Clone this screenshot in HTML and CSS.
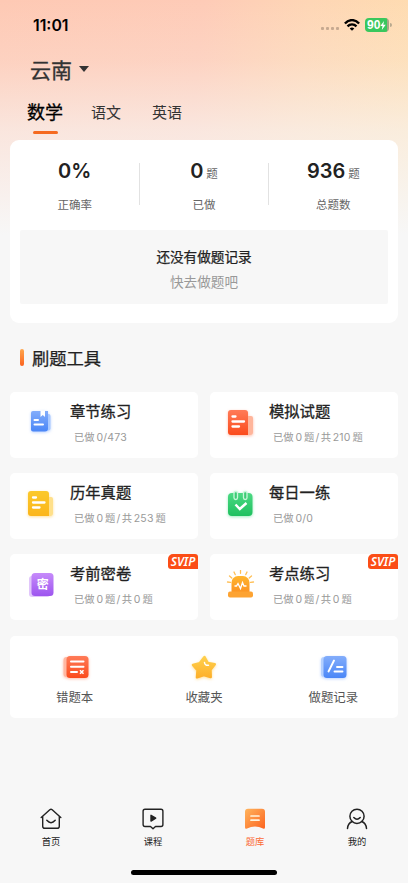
FILE: index.html
```
<!DOCTYPE html>
<html lang="zh-CN">
<head>
<meta charset="utf-8">
<title>题库</title>
<link rel="stylesheet" href="styles.css">
</head>
<body>
<svg class="defs" width="0" height="0" aria-hidden="true">
  <defs>
    <linearGradient id="blue" x1="0" y1="0" x2="0" y2="1"><stop offset="0" stop-color="#83adfb"/><stop offset="1" stop-color="#4a86f7"/></linearGradient>
    <linearGradient id="red" x1="0" y1="0" x2="0" y2="1"><stop offset="0" stop-color="#ff7b58"/><stop offset="1" stop-color="#fb4b1c"/></linearGradient>
    <linearGradient id="yellow" x1="0" y1="0" x2="0" y2="1"><stop offset="0" stop-color="#fbc92c"/><stop offset="1" stop-color="#fbb51a"/></linearGradient>
    <linearGradient id="green" x1="0" y1="0" x2="0" y2="1"><stop offset="0" stop-color="#4cd983"/><stop offset="1" stop-color="#1fc05f"/></linearGradient>
    <linearGradient id="purple" x1="0" y1="0" x2="0" y2="1"><stop offset="0" stop-color="#c68bfa"/><stop offset="1" stop-color="#9d55ef"/></linearGradient>
    <linearGradient id="orange" x1="0" y1="0" x2="0" y2="1"><stop offset="0" stop-color="#ffb62e"/><stop offset="1" stop-color="#fc9322"/></linearGradient>
    <linearGradient id="star" x1="0" y1="0" x2="0" y2="1"><stop offset="0" stop-color="#ffd04c"/><stop offset="1" stop-color="#fdb02b"/></linearGradient>
    <linearGradient id="bank" x1="0" y1="0" x2="1" y2="1"><stop offset="0" stop-color="#ffb45c"/><stop offset="1" stop-color="#fc6420"/></linearGradient>
  </defs>
</svg>

<header class="status">
  <span class="time">11:01</span>
  <span class="signal"><i></i><i></i><i></i><i></i></span>
  <svg class="wifi" width="16" height="12" viewBox="0 0 16 12" fill="none" stroke="#000" stroke-width="2.300"><path d="M.9 4.500C5-.1 11-.1 15.100 4.500"/><path d="M3.500 7.400c2.600-2.700 6.400-2.700 9 0"/><path d="M5.700 9.400q2.300-1.900 4.600 0L8 11.800z" fill="#000" stroke="none"/></svg>
  <span class="battery">90<svg width="6" height="9" viewBox="0 0 6 9"><path d="M4 0L.3 5h2.200L1.800 9 5.700 3.800H3.300z" fill="#fff"/></svg></span><i class="battery-tip"></i>
</header>

<div class="city">云南<i class="caret"></i></div>

<nav class="subjects">
  <span class="subject active">数学</span>
  <span class="subject">语文</span>
  <span class="subject">英语</span>
</nav>

<main>
  <section class="summary">
    <div class="stats">
      <div class="stat"><div class="value">0%</div><div class="label">正确率</div></div>
      <div class="stat"><div class="value">0<small>题</small></div><div class="label">已做</div></div>
      <div class="stat"><div class="value">936<small>题</small></div><div class="label">总题数</div></div>
    </div>
    <div class="empty"><strong>还没有做题记录</strong><span>快去做题吧</span></div>
  </section>

  <h2 class="heading">刷题工具</h2>

  <section class="tools">
    <article class="tool">
      <svg class="icon glow-blue" width="32" height="32" viewBox="0 0 32 32"><rect x="9" y="6" width="13.500" height="16.500" rx="2" fill="#a9c9ff"/><path d="M5 3h15v17.500a3 3 0 0 1-3 3H5a2 2 0 0 1-2-2V5a2 2 0 0 1 2-2z" fill="url(#blue)"/><path d="M12.500 2.500h4.500v6.500l-2.200-2-2.300 2z" fill="#fff"/><path d="M6.500 12h3.500M6.500 16.500h8.500" stroke="#fff" stroke-width="2" stroke-linecap="round"/></svg>
      <div><h3>章节练习</h3><p>已做<b>0/473</b></p></div>
    </article>
    <article class="tool">
      <svg class="icon glow-red" width="32" height="32" viewBox="0 0 32 32"><path d="M18 8h9a2 2 0 0 1 2 2v14a3 3 0 0 1-3 3h-8z" fill="#ffb59b"/><path d="M7 2h14a3 3 0 0 1 3 3v22H7a3 3 0 0 1-3-3V5a3 3 0 0 1 3-3z" fill="url(#red)"/><path d="M8.500 8.500h3M8.500 13.500h11.500M8.500 18.500h6.500" stroke="#fff" stroke-width="2.300" stroke-linecap="round"/></svg>
      <div><h3>模拟试题</h3><p>已做<b>0</b>题<b class="slash">/</b>共<b>210</b>题</p></div>
    </article>
    <article class="tool">
      <svg class="icon glow-yellow" width="32" height="32" viewBox="0 0 32 32"><path d="M18 8h8a2 2 0 0 1 2 2v14a3 3 0 0 1-3 3h-7z" fill="#ffe08a"/><path d="M6 2h15a3 3 0 0 1 3 3v22H6a3 3 0 0 1-3-3V5a3 3 0 0 1 3-3z" fill="url(#yellow)"/><path d="M8 8.500h3M8 13.500h11.500M8 18.500h6.500" stroke="#fff" stroke-width="2.300" stroke-linecap="round"/></svg>
      <div><h3>历年真题</h3><p>已做<b>0</b>题<b class="slash">/</b>共<b>253</b>题</p></div>
    </article>
    <article class="tool">
      <svg class="icon glow-green" width="32" height="32" viewBox="0 0 32 32"><rect x="4" y="4" width="24.500" height="23" rx="4" fill="url(#green)"/><g fill="#3dcb75" stroke="#c9f6da" stroke-width="1.300"><rect x="10" y="2.500" width="3.500" height="8" rx="1.700"/><rect x="19.500" y="2.500" width="3.500" height="8" rx="1.700"/></g><path d="M11.500 15.500l4.300 4.500 6.700-6" fill="none" stroke="#fff" stroke-width="2.500"/></svg>
      <div><h3>每日一练</h3><p>已做<b>0/0</b></p></div>
    </article>
    <article class="tool">
      <svg class="icon" width="32" height="32" viewBox="0 0 32 32"><rect x="4" y="6" width="21" height="21" rx="3" fill="#e1c6fb"/><rect x="6.500" y="3" width="22" height="23" rx="3.500" fill="url(#purple)"/><text x="17.800" y="19" text-anchor="middle" font-family="Noto Sans CJK SC, sans-serif" font-size="12" font-weight="700" fill="#fff">密</text></svg>
      <div><h3>考前密卷</h3><p>已做<b>0</b>题<b class="slash">/</b>共<b>0</b>题</p></div>
      <span class="svip">SVIP</span>
    </article>
    <article class="tool">
      <svg class="icon" width="32" height="32" viewBox="0 0 32 32"><g transform="translate(-.5 -.5)"><g stroke="#ffbf55" stroke-width="1.300" stroke-linecap="round"><path d="M17 .8v3M10.500 2.500l1.200 2.600M23.500 2.500l-1.200 2.600M6 6.500l2.300 2M28 6.500l-2.300 2M4 12.500l3 .4M30 12.500l-3 .4"/></g><path d="M8 23V13a6.500 6.500 0 0 1 6.500-6.500h5a6.500 6.500 0 0 1 6.500 6.500v10z" fill="url(#orange)"/><rect x="4.500" y="22" width="25" height="6" rx="2" fill="#fda332"/><path d="M11 16.500h2l1.500-2.500 2.500 5 2-6 1.500 3.500H23" fill="none" stroke="#fff" stroke-width="1.300"/></g></svg>
      <div><h3>考点练习</h3><p>已做<b>0</b>题<b class="slash">/</b>共<b>0</b>题</p></div>
      <span class="svip">SVIP</span>
    </article>
  </section>

  <section class="shortcuts">
    <div class="shortcut">
      <svg class="glow-red" width="28" height="26" viewBox="0 0 28 26"><rect x="2.500" y="3" width="20" height="20" rx="3" fill="#ffb8a2"/><rect x="5.500" y="2" width="22" height="22" rx="3.500" fill="url(#red)"/><path d="M10 7.500h12.500M10 12.700h12.500M10 18h6" stroke="#fff" stroke-width="2" stroke-linecap="round"/><path d="M19 16.200l3.500 3.600m0-3.600l-3.500 3.600" stroke="#fff" stroke-width="1.500"/></svg>
      <span>错题本</span>
    </div>
    <div class="shortcut">
      <svg class="glow-yellow" width="28" height="26" viewBox="0 0 28 26"><path d="M14.500 3l3.300 6 7 1.300-4.300 5.500.2 7.200-6.900-2-6.800 2.300.5-7L3 11l6.700-1.800z" fill="url(#star)" stroke="url(#star)" stroke-width="2.500" stroke-linejoin="round"/><path d="M14.500 8.500c.3 2.300 2 3.200 4 2.700" fill="none" stroke="#fff" stroke-width="1.500" stroke-linecap="round"/></svg>
      <span>收藏夹</span>
    </div>
    <div class="shortcut">
      <svg class="glow-blue" width="28" height="26" viewBox="0 0 28 26"><rect x="2" y="3" width="20" height="20" rx="3" fill="#b4d0ff"/><rect x="4.500" y="2" width="23" height="22" rx="3.500" fill="url(#blue)"/><path d="M15 6.500L9.500 17.500M18 13h5.500M15.500 17.500h8" stroke="#fff" stroke-width="1.900" stroke-linecap="round"/></svg>
      <span>做题记录</span>
    </div>
  </section>
</main>

<footer class="tabbar">
  <div class="tab"><svg width="22" height="22" viewBox="0 0 22 22" fill="none" stroke="#222" stroke-width="1.400" stroke-linecap="round" stroke-linejoin="round"><path d="M1.200 9.500L9.800 1.700q1.200-.9 2.400 0L20.800 9.500M2.700 8.200v10q0 2.100 2.100 2.100h12.400q2.100 0 2.100-2.100v-10M6.800 12.300q4.200 4.800 8.400 0"/></svg><span>首页</span></div>
  <div class="tab"><svg width="22" height="22" viewBox="0 0 22 22" fill="none" stroke="#222" stroke-width="1.400" stroke-linejoin="round"><path d="M3 1.300h16q1.900 0 1.900 1.900v13.400q0 1.900-1.900 1.900h-5.500L11 20.800l-2.500-2.300H3q-1.900 0-1.900-1.900V3.200Q1.100 1.300 3 1.300z"/><path d="M9 7.300v5.800l4.700-2.900z" fill="#222"/></svg><span>课程</span></div>
  <div class="tab current"><svg width="22" height="22" viewBox="0 0 22 22"><path d="M4 .8h14q3 0 3 3v15.400q0 2.200-2 1.400Q15 18.500 11 18.500T3 20.600q-2 .8-2-1.400V3.800q0-3 3-3z" fill="url(#bank)"/><path d="M7 8h8M7 12.200h8" stroke="#fff3dc" stroke-width="1.700" stroke-linecap="round"/></svg><span>题库</span></div>
  <div class="tab"><svg width="22" height="22" viewBox="0 0 22 22" fill="none" stroke="#222" stroke-width="1.500" stroke-linecap="round"><circle cx="11" cy="8.300" r="7.100"/><path d="M1.500 20.500q.5-5.500 4.800-7M20.500 20.500q-.5-5.500-4.800-7M7.800 9.500q3.200 3.400 6.400 0"/></svg><span>我的</span></div>
</footer>
<div class="home-indicator"></div>
</body>
</html>
```
FILE: styles.css
```
* { box-sizing: border-box; }

body {
  margin: 0;
  width: 408px;
  height: 883px;
  overflow: hidden;
  display: flex;
  flex-direction: column;
  font-family: Inter, "Noto Sans CJK SC", sans-serif;
  color: #222;
  background:
    linear-gradient(180deg, rgba(247, 247, 247, 0) 0, rgba(247, 247, 247, .18) 60px, rgba(247, 247, 247, .62) 130px, #f7f7f7 235px),
    linear-gradient(95deg, #fec9b4 0, #fecbb7 42%, #fed6b5 64%, #ffe0ae 100%);
}

.defs { position: absolute; }

h2, h3, p { margin: 0; font-weight: 400; }

.status {
  height: 50px;
  padding: 0 16px 0 33px;
  display: flex;
  align-items: center;
  color: #000;
}
.time { flex: 1; font-size: 15.800px; font-weight: 600; }
.signal { display: flex; gap: 2px; margin: 7px 5px 0 0; }
.signal i { width: 3px; height: 3px; border-radius: 1px; background: #c6a990; }
.wifi { margin-right: 5px; }
.battery {
  width: 24px;
  height: 14px;
  padding-left: 2px;
  border-radius: 4px;
  display: flex;
  align-items: center;
  background: linear-gradient(90deg, #3ac75d 91%, #a9a484 91%);
  color: #fff;
  font: 700 12px/14px "Liberation Sans", sans-serif;
}
.battery-tip { width: 2px; height: 4px; margin-left: 1px; border-radius: 0 2px 2px 0; background: #b9a98e; }

.city {
  height: 38px;
  margin-bottom: 2px;
  padding-left: 30px;
  display: flex;
  align-items: center;
  gap: 7px;
  font-size: 21px;
  color: #333;
  -webkit-text-stroke: .3px #333;
}
.caret { border: 5px solid transparent; border-top: 6px solid #333; border-bottom: 0; }

.subjects {
  height: 50px;
  padding-left: 27px;
  display: flex;
  align-items: flex-start;
  line-height: 46px;
}
.subject { margin-right: 31px; font-size: 15px; color: #333; }
.active {
  margin-right: 28px;
  font-size: 18px;
  color: #000;
  -webkit-text-stroke: .3px #000;
}
.active::after {
  content: "";
  display: block;
  width: 25px;
  height: 3px;
  margin: -5px auto 0;
  border-radius: 2px;
  background: #f56a20;
}

main { padding: 0 10px; }

.summary {
  height: 183px;
  padding: 16px 10px 0;
  border-radius: 9px;
  background: #fff;
}
.stats { height: 74px; margin: 0 -10px; display: grid; grid-template-columns: repeat(3, 1fr); }
.stat { height: 56px; text-align: center; }
.stat:nth-child(2) {
  background:
    linear-gradient(#e2e2e2, #e2e2e2) left 7px / 1px 42px no-repeat,
    linear-gradient(#e2e2e2, #e2e2e2) right 7px / 1px 42px no-repeat;
}
.value { height: 31px; line-height: 31px; font-size: 20px; font-weight: 600; white-space: nowrap; }
.value small { margin-left: 3px; font-size: 11.500px; font-weight: 400; color: #666; }
.label { margin-top: 8px; line-height: 20px; font-size: 11.500px; color: #666; }
.empty {
  height: 74px;
  padding-top: 15px;
  border-radius: 2px;
  display: flex;
  flex-direction: column;
  align-items: center;
  background: #f7f7f7;
  font-size: 13.600px;
  line-height: 24.500px;
  color: #999;
}
.empty strong { font-weight: 400; color: #222; -webkit-text-stroke: .25px #222; }

.heading {
  height: 69px;
  padding-left: 10px;
  display: flex;
  align-items: center;
  gap: 8px;
  font-size: 17.300px;
  -webkit-text-stroke: .25px #222;
}
.heading::before {
  content: "";
  width: 4px;
  height: 17px;
  border-radius: 2px;
  background: linear-gradient(#ffa64d, #fb6420);
}

.tools { display: grid; grid-template-columns: 188px 188px; gap: 15px 12px; }
.tool {
  position: relative;
  height: 66px;
  padding-left: 15px;
  border-radius: 5px;
  display: flex;
  gap: 13px;
  background: #fff;
}
.tool:nth-child(even) { padding-left: 14px; }
.icon { margin-top: 16px; }
.tool > .glow-blue { margin: 16px -3px 0 3px; }
.tool > div { padding-top: 8px; }
.tool h3 { font-size: 15.300px; line-height: 24px; -webkit-text-stroke: .3px #222; }
.tool p {
  padding-left: 4px;
  margin-top: 3px;
  line-height: 20px;
  font-size: 10.300px;
  color: #999;
  white-space: nowrap;
}
.tool p b { margin: 0 1.800px; font-weight: 400; font-size: 10.500px; letter-spacing: .2px; }
.tool p .slash { margin: 0 1.200px; }

.svip {
  position: absolute;
  top: 0;
  right: 0;
  width: 30px;
  height: 15px;
  border-radius: 5px 3px 0 3px;
  background: #fb4d16;
  color: #fff;
  font: italic 600 12px/15px "Noto Sans", sans-serif;
  text-align: center;
}

.glow-blue { filter: drop-shadow(0 1px 1.500px #8fb5ff99); }
.glow-red { filter: drop-shadow(0 1px 1.500px #ff8f7099); }
.glow-yellow { filter: drop-shadow(0 1px 1.500px #ffcb5899); }
.glow-green { filter: drop-shadow(0 1px 1.500px #5fe09699); }

.shortcuts {
  height: 82px;
  margin-top: 16px;
  padding-top: 18px;
  border-radius: 5px;
  display: grid;
  grid-template-columns: repeat(3, 1fr);
  background: #fff;
}
.shortcut {
  display: flex;
  flex-direction: column;
  align-items: center;
  font-size: 12.400px;
  line-height: 20px;
  color: #555;
}
.shortcut span { margin-top: 8px; }

.tabbar { margin-top: 90px; height: 62px; display: grid; grid-template-columns: repeat(4, 1fr); }
.tab {
  display: flex;
  flex-direction: column;
  align-items: center;
  font-size: 9.300px;
  line-height: 14px;
}
.tab span { margin-top: 5px; }
.current { color: #fb6a35; }

.home-indicator { width: 146px; height: 5px; margin: 0 auto; border-radius: 3px; background: #000; }
```
